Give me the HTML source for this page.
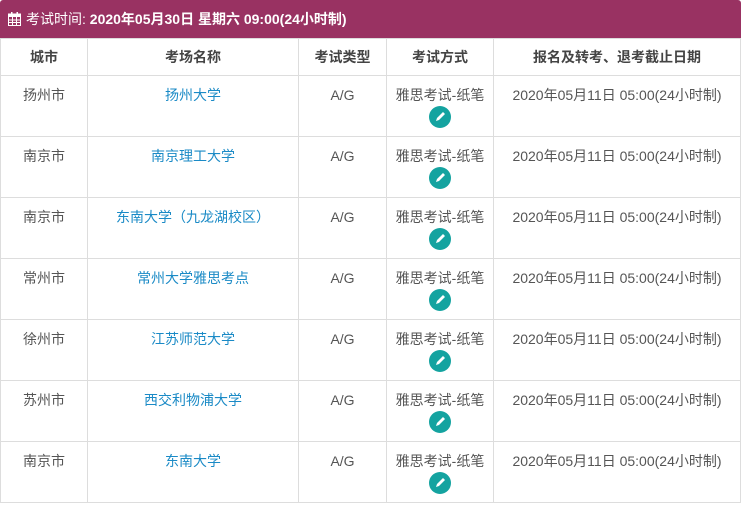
<!DOCTYPE html><html><head><meta charset="utf-8"><style>
body{margin:0;width:741px;height:505px;background:#fff;font-family:"Liberation Sans","Noto Sans CJK SC",sans-serif;font-size:14px;color:#555;overflow:hidden}
.bar{position:absolute;left:0;top:0;width:741px;height:38px;background:#993262;color:#fff;font-size:14px;line-height:38px;border-radius:3px 3px 0 0}
.bar span{position:absolute;left:26px}
table{position:absolute;left:0;top:38px;border-collapse:collapse;width:741px;table-layout:fixed}
td,th{border:1px solid #ddd;text-align:center;vertical-align:top;padding:0}
th{height:36px;line-height:36px;font-weight:bold;color:#444}
td{height:61px;padding-top:10px;box-sizing:border-box;line-height:18px}
a{color:#1a8ac6;text-decoration:none}
.ic{display:block;margin:2px auto 0;width:22px;height:22px;border-radius:50%;background:#14a3a0}
</style></head><body>
<div class="bar"><svg style="position:absolute;left:8px;top:12px" width="13" height="14" viewBox="0 0 13 14"><rect x="0.5" y="2" width="12" height="11.5" fill="none" stroke="#fff"/><rect x="0.5" y="2" width="12" height="3" fill="#fff"/><rect x="3" y="0" width="1.5" height="3" fill="#fff"/><rect x="8.5" y="0" width="1.5" height="3" fill="#fff"/><path d="M4.5 5v8M8.5 5v8M1 8h11M1 10.5h11" stroke="#fff"/></svg><span>考试时间: <b>2020年05月30日 星期六 09:00(24小时制)</b></span></div>
<table>
<colgroup><col style="width:87px"><col style="width:211px"><col style="width:88px"><col style="width:107px"><col></colgroup>
<tr><th>城市</th><th>考场名称</th><th>考试类型</th><th>考试方式</th><th>报名及转考、退考截止日期</th></tr>
<tr><td>扬州市</td><td><a>扬州大学</a></td><td>A/G</td><td>雅思考试-纸笔<i class="ic"><svg width="22" height="22"><path d="M7 15l1-3 6-6 2 2-6 6z" fill="#fff"/></svg></i></td><td>2020年05月11日 05:00(24小时制)</td></tr>
<tr><td>南京市</td><td><a>南京理工大学</a></td><td>A/G</td><td>雅思考试-纸笔<i class="ic"><svg width="22" height="22"><path d="M7 15l1-3 6-6 2 2-6 6z" fill="#fff"/></svg></i></td><td>2020年05月11日 05:00(24小时制)</td></tr>
<tr><td>南京市</td><td><a>东南大学（九龙湖校区）</a></td><td>A/G</td><td>雅思考试-纸笔<i class="ic"><svg width="22" height="22"><path d="M7 15l1-3 6-6 2 2-6 6z" fill="#fff"/></svg></i></td><td>2020年05月11日 05:00(24小时制)</td></tr>
<tr><td>常州市</td><td><a>常州大学雅思考点</a></td><td>A/G</td><td>雅思考试-纸笔<i class="ic"><svg width="22" height="22"><path d="M7 15l1-3 6-6 2 2-6 6z" fill="#fff"/></svg></i></td><td>2020年05月11日 05:00(24小时制)</td></tr>
<tr><td>徐州市</td><td><a>江苏师范大学</a></td><td>A/G</td><td>雅思考试-纸笔<i class="ic"><svg width="22" height="22"><path d="M7 15l1-3 6-6 2 2-6 6z" fill="#fff"/></svg></i></td><td>2020年05月11日 05:00(24小时制)</td></tr>
<tr><td>苏州市</td><td><a>西交利物浦大学</a></td><td>A/G</td><td>雅思考试-纸笔<i class="ic"><svg width="22" height="22"><path d="M7 15l1-3 6-6 2 2-6 6z" fill="#fff"/></svg></i></td><td>2020年05月11日 05:00(24小时制)</td></tr>
<tr><td>南京市</td><td><a>东南大学</a></td><td>A/G</td><td>雅思考试-纸笔<i class="ic"><svg width="22" height="22"><path d="M7 15l1-3 6-6 2 2-6 6z" fill="#fff"/></svg></i></td><td>2020年05月11日 05:00(24小时制)</td></tr>
</table>
</body></html>
